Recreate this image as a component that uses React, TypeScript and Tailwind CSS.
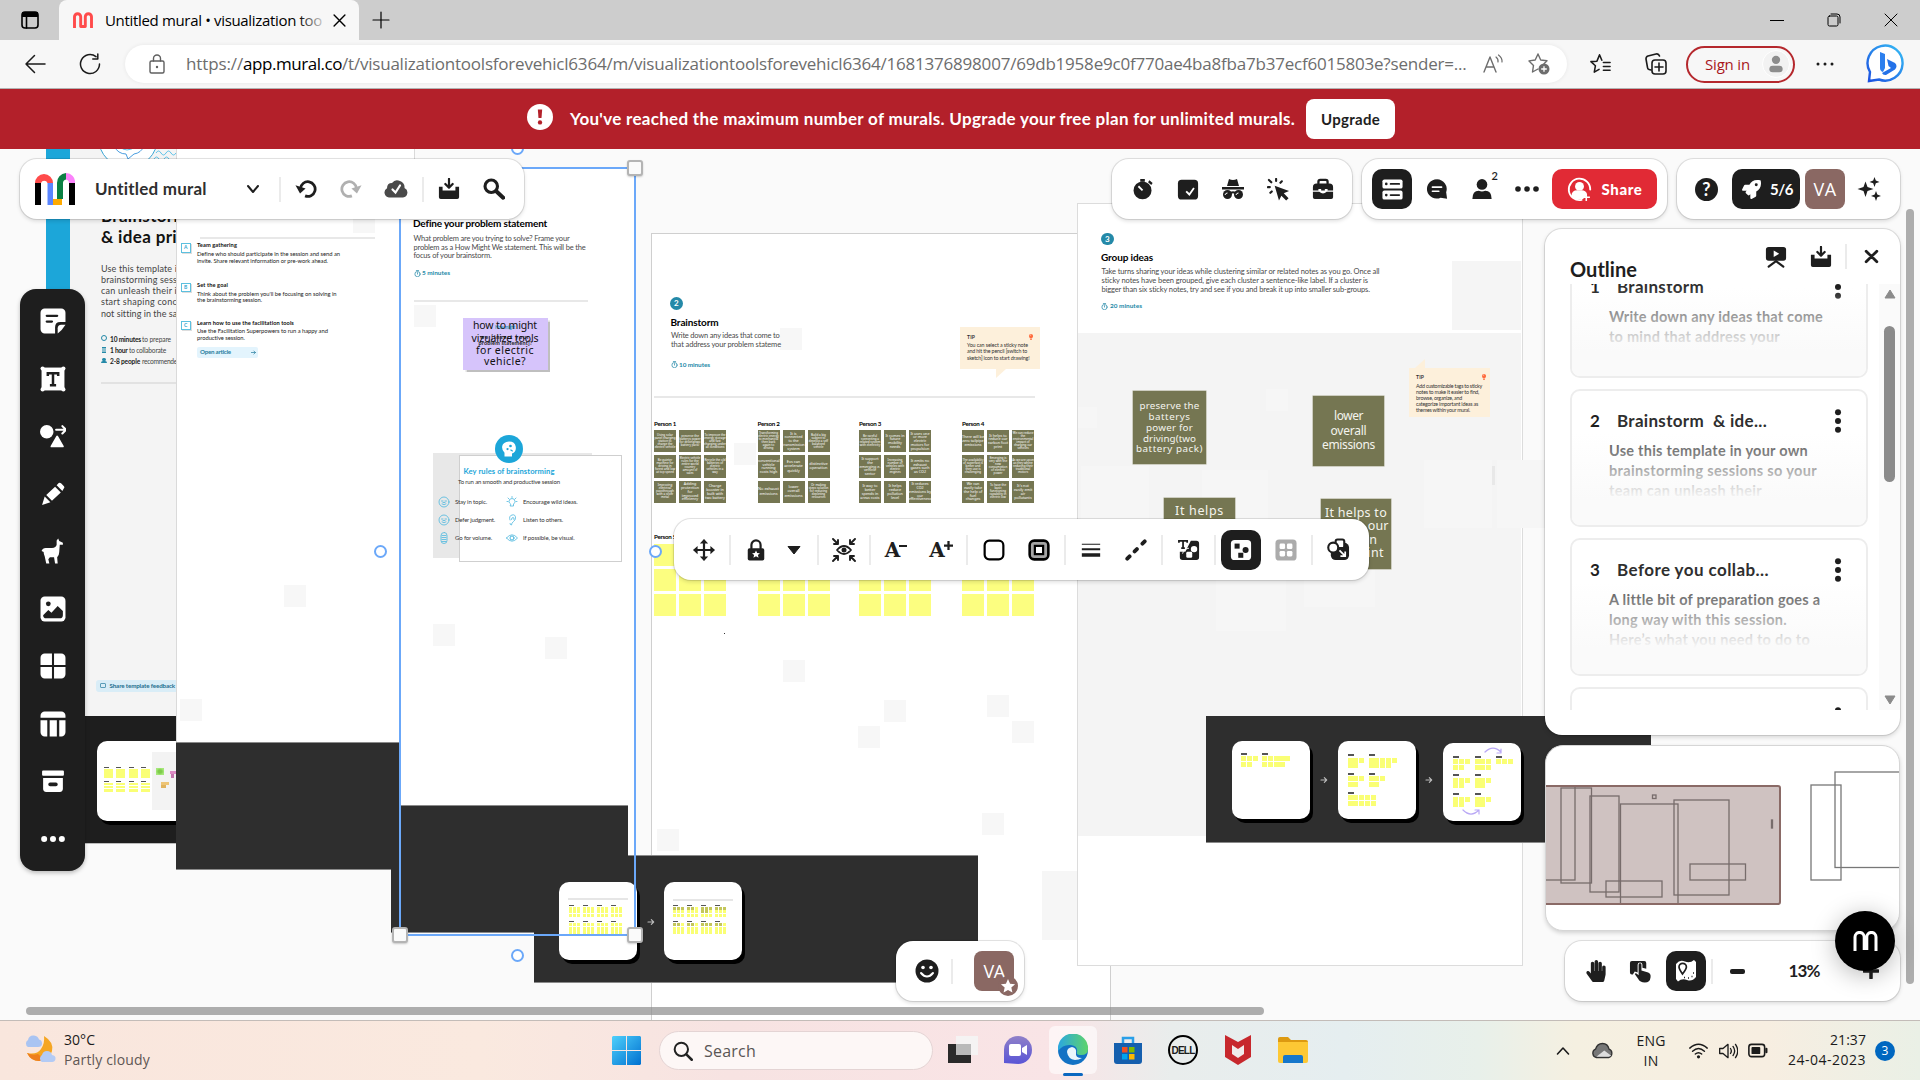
import React, { useLayoutEffect, useRef } from "react";
import { FaRocket, FaHandPaper, FaLightbulb } from "react-icons/fa";

const UI = "font-['Open_Sans','Noto_Sans',sans-serif]";
const HAND = "font-['Noto_Sans',sans-serif]";

/* Text run whose tracking is adjusted to fill a given width. */
function T({ w, className = "", children }: { w: number; className?: string; children: string }) {
  const ref = useRef<HTMLSpanElement>(null);
  useLayoutEffect(() => {
    const el = ref.current!;
    el.style.letterSpacing = "0px";
    const natural = el.getBoundingClientRect().width;
    el.style.letterSpacing = `${(w - natural) / children.length}px`;
  }, [w, children]);
  return (
    <span ref={ref} className={"inline-block w-max whitespace-pre " + className}>
      {children}
    </span>
  );
}

/* Text placed on the canvas; y is its vertical centre. */
function Label({ x, y, w, c = "", children }: { x: number; y: number; w: number; c?: string; children: string }) {
  return (
    <div className={"absolute -translate-y-1/2 leading-none " + c} style={{ left: x, top: y }}>
      <T w={w} className="align-top">{children}</T>
    </div>
  );
}

function Box({ x, y, w, h, c = "", children }: { x: number; y: number; w: number; h: number; c?: string; children?: React.ReactNode }) {
  return (
    <div className={"absolute " + c} style={{ left: x, top: y, width: w, height: h }}>
      {children}
    </div>
  );
}

function Ic({ s = 22, c = "", vb = "0 0 24 24", children }: { s?: number; c?: string; vb?: string; children: React.ReactNode }) {
  return (
    <svg width={s} height={s} viewBox={vb} className={"shrink-0 " + c} fill="currentColor">
      {children}
    </svg>
  );
}

const L = { fill: "none", stroke: "currentColor", strokeLinecap: "round", strokeLinejoin: "round" } as const;

const Slot = ({ children, c = "" }: { children: React.ReactNode; c?: string }) => (
  <div className={"relative flex w-[45px] shrink-0 items-center justify-center " + c}>{children}</div>
);
const Div = ({ c = "mx-[2.75px] h-[30px]" }: { c?: string }) => <div className={"w-[2px] shrink-0 bg-[#ebebeb] " + c} />;
const BAR = "absolute flex items-center rounded-[17px] bg-white shadow-[0_0_0_1px_rgba(0,0,0,0.1),0_2px_4px_rgba(0,0,0,0.14)] text-[#1e1e1e]";

/* ---------- Browser chrome ---------- */
function MuralMark({ c, s = 22 }: { c: string; s?: number }) {
  return (
    <svg width={s} height={s * 0.8} viewBox="0 0 20 16" className={c} {...L} strokeLinecap="butt" strokeWidth="2.900">
      <path d="M1.500 16V4.800a3 3 0 0 1 6.200 0v9.700h4.600V4.800a3 3 0 0 1 6.200 0V16" />
    </svg>
  );
}

function TabStrip() {
  return (
    <div className="flex h-10 items-center bg-[#cdcdcd] text-black">
      <div className="flex w-[59px] justify-center">
        <Ic s={20} vb="0 0 20 20"><rect x="2" y="2" width="16" height="16" rx="3" {...L} strokeWidth="1.6" /><path d="M2 3.500h16v3.500H2zM2 2h16v2H2z" /><path d="M6.500 6v12" {...L} strokeWidth="1.6" /></Ic>
      </div>
      <div className="flex h-10 w-[300px] items-center rounded-t-[8px] bg-[#f7f7f7] pl-[14px]">
        <MuralMark c="text-[#ff4b4b]" s={20} />
        <div className={"relative ml-3 w-[217px] overflow-hidden text-[15px] leading-5 " + UI}>
          <T w={217}>Untitled mural • visualization too</T>
          <div className="absolute inset-y-0 right-0 w-6 bg-gradient-to-r from-transparent to-[#f7f7f7]/80" />
        </div>
        <Ic s={13} c="ml-[11px]" vb="0 0 12 12"><path d="M1 1l10 10M11 1L1 11" {...L} strokeWidth="1.3" /></Ic>
      </div>
      <Ic s={18} c="ml-[13px]" vb="0 0 18 18"><path d="M9 1v16M1 9h16" {...L} strokeWidth="1.2" /></Ic>
      <div className="ml-auto flex items-center gap-[43px] pr-[22px]">
        <div className="h-px w-[14px] bg-black" />
        <Ic s={14} vb="0 0 14 14"><rect x="1" y="3" width="10" height="10" rx="1.500" {...L} /><path d="M4 1h6a3 3 0 0 1 3 3v6" {...L} /></Ic>
        <Ic s={14} vb="0 0 14 14"><path d="M1 1l12 12M13 1L1 13" {...L} /></Ic>
      </div>
    </div>
  );
}

function AddressBar() {
  return (
    <div className={"flex h-[49px] items-center border-b border-[#b3b3b3] bg-[#f7f7f7] text-[17px] text-[#1b1b1b] " + UI}>
      <Ic s={22} c="ml-[24px]" vb="0 0 22 22"><path d="M21 11H2M10.500 2.500L2 11l8.500 8.500" {...L} strokeWidth="1.500" /></Ic>
      <Ic s={22} c="ml-[33px]" vb="0 0 22 22"><path d="M20.500 11A9.500 9.500 0 1 1 17 3.700M18.800 1v5h-5" {...L} strokeWidth="1.500" /></Ic>
      <div className="ml-[24px] flex h-[38px] w-[1442px] items-center rounded-full bg-white text-[#6d6d6d] shadow-[0_0_4px_rgba(0,0,0,0.07)]">
        <Ic s={20} c="ml-[22px] text-[#5f5f5f]" vb="0 0 20 20"><rect x="3" y="7" width="14" height="12" rx="1.500" {...L} strokeWidth="1.400" /><path d="M6.500 7V4.500a3.500 3.500 0 0 1 7 0V7" {...L} strokeWidth="1.400" /><circle cx="10" cy="13" r="1.200" /></Ic>
        <div className="ml-[19px] flex leading-6">
          <T w={57}>https://</T>
          <T w={99} className="text-black">app.mural.co</T>
          <T w={1124.5}>/t/visualizationtoolsforevehicl6364/m/visualizationtoolsforevehicl6364/1681376898007/69db1958e9c0f770ae4ba8fba7b37ecf6015803e?sender=...</T>
        </div>
        <Ic s={22} c="ml-[15px]" vb="0 0 22 22"><path d="M2 19L8 4l6 15M4 14h8" {...L} strokeWidth="1.400" /><path d="M14 4q2.500 2 2 5M16.500 2q4 3 3.500 7" {...L} strokeWidth="1.200" /></Ic>
        <Ic s={24} c="ml-[23px]" vb="0 0 24 24"><path d="M11 2l2.700 6 6.300.7-3 3M11 2L8.200 8 2 8.900l4.500 4.500-1 6.600 5.500-3" {...L} strokeWidth="1.400" /><circle cx="17" cy="17" r="5.500" /><path d="M17 14.200v5.600M14.200 17h5.600" stroke="white" strokeWidth="1.300" /></Ic>
      </div>
      <Ic s={23} c="ml-[22px]"><path d="M11 2L8.300 8.500 2 9l4.700 4.300L5.500 20l5-3M11 2l2.400 5.500M15 10h7M15 14h7M15 18h7" {...L} strokeWidth="1.600" /></Ic>
      <Ic s={24} c="ml-[32px]"><rect x="8" y="8" width="14" height="14" rx="3" {...L} strokeWidth="1.600" /><path d="M15 11v8M11 15h8M7 18l-2-.5a2 2 0 0 1-1.500-2L2 7a3 3 0 0 1 2-3l8-2a3 3 0 0 1 3.500 2" {...L} strokeWidth="1.600" /></Ic>
      <div className="ml-[18px] flex h-[37px] w-[109px] items-center rounded-full border-2 border-[#b5282d] pl-[17px] text-[15px] text-[#a8161c]">
        <T w={45}>Sign in</T>
        <div className="ml-[12px] flex h-[28px] w-[28px] items-center justify-center rounded-full border border-[#fff] bg-[#f2f2f2] text-[#8d8d8d]">
          <Ic s={20}><circle cx="12" cy="7" r="5" /><rect x="4" y="14" width="16" height="8" rx="4" /></Ic>
        </div>
      </div>
      <Ic s={20} c="ml-[20px]" vb="0 0 20 4"><circle cx="3" cy="2" r="1.500" /><circle cx="10" cy="2" r="1.500" /><circle cx="17" cy="2" r="1.500" /></Ic>
      <svg width="40" height="40" viewBox="0 0 40 40" className="ml-[31px]">
        <defs><linearGradient id="bg" x1="0" y1="1" x2="1" y2="0"><stop offset="0" stopColor="#1b4fe0" /><stop offset="1" stopColor="#37bdf5" /></linearGradient></defs>
        <path d="M3 37l1-9A17.500 17.500 0 1 1 13 35.500z" fill="white" stroke="url(#bg)" strokeWidth="2.400" />
        <path d="M14 8l5 2v14l-2 4q-3-1-3-4z" fill="#2c7fee" /><path d="M21 15l8 4q3 3 0 6.500L20 31q-3 .5-4-2l9-5-2.500-2z" fill="#2472e8" />
      </svg>
    </div>
  );
}

/* ---------- Canvas content ---------- */
const stray = [
  [353, 211], [284, 585], [180, 699], [414, 305], [433, 624], [545, 637], [783, 660], [884, 700], [987, 695],
  [1012, 721], [858, 726], [982, 813], [657, 829], [780, 328], [734, 443],
];

const BODY = "text-[#4a4a4a]";
type Row = [number, number, number, string, string];
const P = "text-[7.5px] " + BODY;
const MIN = "text-[6.4px] font-bold text-[#2489a8]";
const RULE = "text-[6px] text-[#333]";
const TIP = "text-[5.3px] text-[#333]";
const H = "text-[10px] font-bold text-black";
const SB = "text-[5.7px] font-bold text-[#111]";
const SP = "text-[5.8px] text-[#222]";

const canvasLabels: Row[] = [
  [413, 223.3, 134, H, "Define your problem statement"],
  [413.5, 238.5, 156, P, "What problem are you trying to solve? Frame your"],
  [413.5, 247.5, 172, P, "problem as a How Might We statement. This will be the"],
  [413.5, 256, 78, P, "focus of your brainstorm."],
  [422, 273, 28, MIN, "5 minutes"],
  [463.5, 472.3, 91, "text-[7.6px] font-bold text-[#1ca6d9]", "Key rules of brainstorming"],
  [458, 482, 102, RULE, "To run an smooth and productive session"],
  [455, 502, 32, RULE, "Stay in topic."],
  [455, 520, 40, RULE, "Defer judgment."],
  [455, 538, 37, RULE, "Go for volume."],
  [523, 502, 54.5, RULE, "Encourage wild ideas."],
  [523, 520, 40, RULE, "Listen to others."],
  [523, 538, 51.5, RULE, "If possible, be visual."],
  [670.5, 321.5, 48, H, "Brainstorm"],
  [671, 336, 108.5, P, "Write down any ideas that come to"],
  [671, 344.7, 110, P, "that address your problem stateme"],
  [679, 364.5, 31, MIN, "10 minutes"],
  [967, 337, 8, "text-[5px] font-bold text-[#333]", "TIP"],
  [967, 346, 61, TIP, "You can select a sticky note"],
  [967, 352, 60, TIP, "and hit the pencil [switch to"],
  [967, 358.5, 62.5, TIP, "sketch] icon to start drawing!"],
];

const labels2: Row[] = [
  [200, 163.5, 82, "text-[11px] font-bold text-black", "Before you collaborate"],
  [197, 245, 40, SB, "Team gathering"],
  [197, 254, 143, SP, "Define who should participate in the session and send an"],
  [197, 261, 131, SP, "invite. Share relevant information or pre-work ahead."],
  [197, 285, 31, SB, "Set the goal"],
  [197, 293.5, 139.5, SP, "Think about the problem you'll be focusing on solving in"],
  [197, 300, 65, SP, "the brainstorming session."],
  [197, 323, 97, SB, "Learn how to use the facilitation tools"],
  [197, 331, 131, SP, "Use the Facilitation Superpowers to run a happy and"],
  [197, 338, 48, SP, "productive session."],
];

const labels5: Row[] = [
  [1101, 257, 52, H, "Group ideas"],
  [1101.5, 271.5, 278, P, "Take turns sharing your ideas while clustering similar or related notes as you go. Once all"],
  [1101.5, 280.5, 266.5, P, "sticky notes have been grouped, give each cluster a sentence-like label. If a cluster is"],
  [1101.5, 289.5, 268.5, P, "bigger than six sticky notes, try and see if you and break it up into smaller sub-groups."],
  [1110, 306, 32, MIN, "20 minutes"],
  [1416, 377, 8, "text-[5px] font-bold text-[#333]", "TIP"],
  [1416, 387, 66, TIP, "Add customizable tags to sticky"],
  [1416, 393, 63, TIP, "notes to make it easier to find,"],
  [1416, 399, 46, TIP, "browse, organize, and"],
  [1416, 404.5, 62, TIP, "categorize important ideas as"],
  [1416, 410.5, 54, TIP, "themes within your mural."],
];

function Labels({ data }: { data: Row[] }) {
  return <>{data.map(([x, y, w, c, t], i) => <Label key={i} x={x} y={y} w={w} c={c}>{t}</Label>)}</>;
}

function Watch({ x, y }: { x: number; y: number }) {
  return (
    <Box x={x - 3.5} y={y - 3.5} w={7} h={7} c="text-[#2489a8]">
      <Ic s={7} c="block"><circle cx="12" cy="14" r="9" {...L} strokeWidth="2.500" /><path d="M12 14V9M8 1.500h8" {...L} strokeWidth="2.500" /></Ic>
    </Box>
  );
}

const notes: string[][] = [
  ["Using solar panel charging station to charge the electric vehicle", "preserve the batterys power for driving(two battery pack)", "To improve the energy storage and fast charging under all conditions", "Be quieter machine for driving in forest and low at top speed", "Electric vehicle rules for the entire world country amount of sales", "Recycle the old batteries of electric vehicles in a way", "Improving electrical passthrough with a silver metal", "Adding protection for improved efficiency", "Charge booster in built with two battery"],
  ["Transforming electric energy to mechanical then back again to driving", "It is connected to the transmission system", "Build a big subject to develop a self balanced vehicle", "conventional vehicle running costs high", "Evs can accelerate quickly", "distinctive operation", "No exhaust emissions", "lower overall emissions", "Or making steps solution for reducing depleting resources"],
  ["Be careful connecting a related system with electricity", "It comes in future mobility needs", "It uses one or more electric motors for propulsion", "It support the emerging e-vehicle sector", "Increasing number of vehicles with electric engines", "It emits no exhaust gases such as CO2", "It way to better spends in areas costs", "It helps reduce pollution level", "It reduces CO2 emissions by our effectiveness"],
  ["There will be zero tailpipe emissions", "It helps to reduce our carbon foot print", "We can reduce the environmental impact of charging our vehicles", "The availability of superfast is better and then use is challenging", "Emerging is very with the new consumption of electric power", "As we are upon as they where reducing their traditional motors", "We can easily take the help of fuel changes", "To have the basic functioning capability in electric low", "It's not easily emit air pollutants"],
];
const noteSize = ["text-[3px] leading-[3px]", "text-[3.7px] leading-[3.8px]", "text-[3.9px] leading-[4.6px]"];

function Person({ x, n }: { x: number; n: number }) {
  return (
    <>
      <Label x={x} y={423.5} w={22} c="text-[6.2px] font-bold text-black">{`Person ${n}`}</Label>
      <div className="absolute grid grid-cols-[repeat(3,22px)] gap-[3px]" style={{ left: x, top: 430 }}>
        {notes[n - 1].map((t, i) => (
          <div key={i} className={"flex h-[22.3px] items-center justify-center overflow-hidden bg-[#757652] text-center text-white " + HAND + " " + noteSize[t.length > 50 ? 0 : t.length > 28 ? 1 : 2]}>{t}</div>
        ))}
      </div>
      <Label x={x} y={537} w={22} c="text-[6.2px] font-bold text-black">{`Person ${n + 4}`}</Label>
      <div className="absolute grid grid-cols-[repeat(3,22px)] gap-[3px]" style={{ left: x, top: 544 }}>
        {Array.from({ length: 9 }, (_, i) => <div key={i} className="h-[22px] bg-[#fcfe80]" />)}
      </div>
    </>
  );
}

/* Tiny cluster of yellow notes, `rows` lists the note count of each line. */
function Cluster({ x, y, rows }: { x: number; y: number; rows: number[] }) {
  return (
    <div className="absolute flex flex-col gap-[0.6px]" style={{ left: x, top: y }}>
      <div className="mb-px h-[2px] w-[6px] bg-[#555]" />
      {rows.map((n, r) => (
        <div key={r} className="flex gap-[0.6px]">
          {Array.from({ length: n }, (_, i) => <div key={i} className="h-[5px] w-[5.2px] bg-[#faff75]" />)}
        </div>
      ))}
    </div>
  );
}

function MiniGrid({ x, y, dark = 0, small = false }: { x: number; y: number; dark?: number; small?: boolean }) {
  return (
    <div className="absolute" style={{ left: x, top: y }}>
      <div className="mb-px h-px w-[5px] bg-[#555]" />
      <div className={"grid gap-[0.4px] " + (small ? "grid-cols-[repeat(3,2.8px)]" : "grid-cols-[repeat(3,3.4px)]")}>
        {Array.from({ length: 9 }, (_, i) => <div key={i} className={(small ? "h-[2.8px] " : "h-[3.3px] ") + (i < dark ? "bg-[#c3c65a]" : "bg-[#faff75]")} />)}
      </div>
    </div>
  );
}

const CARD = "rounded-[10px] bg-white shadow-[3px_4px_0_#000]";
const DARK = "bg-[#2e2e2e] border-b border-[#8a8a8a]";

function Arrow({ x, y, c = "text-[#bbb]" }: { x: number; y: number; c?: string }) {
  return <Box x={x - 4} y={y - 4} w={8} h={8} c={c}><Ic s={8} c="block"><path d="M3 12h17M13 5l7 7-7 7" {...L} strokeWidth="3.500" /></Ic></Box>;
}

function BoardIntro() {
  return (
    <Box x={0} y={149} w={177} h={700} c="overflow-hidden">
      <Box x={0} y={-149} w={400} h={1020}>
        <Box x={46} y={140} w={24} h={200} c="bg-[#1ca6d9]" />
        <Box x={70} y={140} w={107} h={576} c="bg-[#f4f4f4]" />
        <Box x={98} y={108} w={60} h={60} c="rounded-full border-[1.5px] border-[#3aa6d5] bg-white" />
        <Box x={112} y={136} w={66} h={24} c="text-[#4a9ee0]">
          <svg width="66" height="24" fill="none" stroke="currentColor" strokeWidth="1"><path d="M2 10q4 8 12 8l2 5 6-5q7-1 10-8" /><path d="M7 10q4 4 8 4t10-4M44 17q2.500-4 5 0t5 0 5 0 5 0M42 23q2.500-4 5 0t5 0 5 0 5 0" stroke="#5cc2e8" /></svg>
        </Box>
        <Label x={101} y={215} w={87} c="text-[17px] font-bold text-[#111]">Brainstorm</Label>
        <Label x={101} y={236} w={76} c="text-[17px] font-bold text-[#111]">{"& idea pri"}</Label>
        <Label x={101} y={267.5} w={76} c="text-[9px] text-[#444]">Use this template i</Label>
        <Label x={101} y={278.5} w={76} c="text-[9px] text-[#444]">brainstorming sess</Label>
        <Label x={101} y={290} w={76} c="text-[9px] text-[#444]">can unleash their i</Label>
        <Label x={101} y={301} w={76} c="text-[9px] text-[#444]">start shaping conc</Label>
        <Label x={101} y={312.5} w={76} c="text-[9px] text-[#444]">not sitting in the sa</Label>
        <Box x={101} y={335} w={6} h={6} c="rounded-full border border-[#2489a8]" />
        <Box x={102} y={347} w={4} h={6} c="border-y border-[#2489a8] bg-[#2489a8]/50" />
        <Box x={102} y={358} w={4} h={3} c="rounded-full bg-[#2489a8]" />
        <Box x={101} y={361} w={6} h={2} c="rounded-t-full bg-[#2489a8]" />
        <Label x={110} y={338.5} w={31} c="text-[6.6px] font-bold text-[#222]">10 minutes</Label>
        <Label x={142} y={338.5} w={29} c="text-[6.6px] text-[#444]">to prepare</Label>
        <Label x={110} y={350} w={17.5} c="text-[6.6px] font-bold text-[#222]">1 hour</Label>
        <Label x={129} y={350} w={37} c="text-[6.6px] text-[#444]">to collaborate</Label>
        <Label x={110} y={361} w={30} c="text-[6.6px] font-bold text-[#222]">2-8 people</Label>
        <Label x={142} y={361} w={35} c="text-[6.6px] text-[#444]">recommende</Label>
        <Box x={101} y={382} w={76} h={2} c="bg-[#e2e2e2]" />
        <Box x={96} y={680} w={90} h={12} c="rounded-[3px] bg-[#d9edf7]" />
        <Box x={100} y={683} w={6} h={5} c="rounded-[1px] border border-[#5b9db8]" />
        <Label x={109.5} y={686} w={65.5} c="text-[6.2px] font-bold text-[#1f6f8f]">Share template feedback</Label>
        <Box x={70} y={716} w={107} h={128} c="border-b border-[#bbb] bg-[#1e1e1e]" />
        <Box x={97} y={741} w={120} h={80} c={CARD} />
        <Box x={152} y={752} w={30} h={58} c="bg-[#f3f3f3]" />
        {[104, 116, 129, 141].map((x) => [767, 780.5].map((y) => <MiniGrid key={x + "-" + y} x={x} y={y} small />))}
        <Box x={156} y={768} w={8} h={7} c="bg-[radial-gradient(#7ecb4a_30%,#a6e87a_70%)]" />
        <Box x={170} y={771} w={7} h={3} c="bg-[#dc8cc4]" />
        <Box x={171} y={774} w={3} h={4} c="bg-[#c477ae]" />
        <Box x={161} y={782} w={8} h={3} c="bg-[#edc476]" />
        <Box x={161} y={785} w={5} h={3} c="bg-[#e0b35e]" />
      </Box>
    </Box>
  );
}

function RuleIcon({ x, y, k }: { x: number; y: number; k: number }) {
  return (
    <Box x={x - 6} y={y - 6} w={12} h={12} c="text-[#4db8de]">
      <Ic s={12} c="block">
        {k === 0 && <><circle cx="12" cy="12" r="10" {...L} strokeWidth="1.600" /><path d="M7 10h3M14 10h3M8 16q4 3 8 0M10 13h4" {...L} strokeWidth="1.600" /></>}
        {k === 1 && <path d="M9 16q-3-2-3-5a6 6 0 0 1 12 0q0 3-3 5v4H9zM12 1v2M2 11h2M20 11h2M4 4l2 2M20 4l-2 2" {...L} strokeWidth="1.600" />}
        {k === 2 && <path d="M8 12q-3-8 4-10t7 6q0 4-4 7t-4 7q-3 0-3-3M11 11q0-4 3-4t2 4" {...L} strokeWidth="1.600" />}
        {k === 3 && <><rect x="6" y="1" width="12" height="22" rx="6" {...L} strokeWidth="1.600" /><path d="M8 7h8M8 11h8M8 15h8M8 19h8" {...L} strokeWidth="1.600" /></>}
        {k === 4 && <><path d="M1 12q11-13 22 0-11 13-22 0z" {...L} strokeWidth="1.600" /><circle cx="12" cy="12" r="4" {...L} strokeWidth="2" /></>}
      </Ic>
    </Box>
  );
}

function Bulb({ x, y }: { x: number; y: number }) {
  return <Box x={x - 3} y={y - 3} w={6} h={6} c="text-[#ff6b3d]"><FaLightbulb size={6} className="block" /></Box>;
}

function Sticky({ x, y, w, h, c, lines }: { x: number; y: number; w: number; h: number; c: string; lines: [string, number, number][] }) {
  return (
    <Box x={x} y={y} w={w} h={h} c="bg-[#757652] shadow-[0_0_0_0.5px_#a5a68c]">
      {lines.map(([t, cy, tw]) => <Label key={t} x={w / 2 - tw / 2} y={cy - y} w={tw} c={"text-[#f4f4ee] " + HAND + " " + c}>{t}</Label>)}
    </Box>
  );
}

function Boards() {
  return (
    <>
      <BoardIntro />
      {/* Before you collaborate */}
      <Box x={176} y={100} w={239} h={642} c="border-x border-[#dadada] bg-white" />
      <Box x={176} y={742} w={260} h={128} c={DARK + " border-t"} />
      <Labels data={labels2} />
      <Box x={200} y={236.5} w={175} h={2} c="bg-[#e8e8e8]" />
      {["A", "B", "C"].map((t, i) => (
        <Box key={t} x={181} y={[243, 282.5, 320.5][i]} w={9.5} h={9.5} c="flex items-center justify-center border border-[#5cc0df] bg-white text-[5px] font-bold leading-none text-[#2fa6cf] shadow-[1px_1px_0_#ddd]">{t}</Box>
      ))}
      <Box x={197} y={347} w={61} h={11} c="rounded-[2px] bg-[#e3f4fd]" />
      <Label x={200} y={352} w={31} c="text-[6.2px] font-bold text-[#2a7fa0]">Open article</Label>
      <Box x={250.5} y={349.5} w={5} h={5} c="text-[#2a7fa0]"><Ic s={5} c="block"><path d="M2 12h19M14 5l7 7-7 7" {...L} strokeWidth="3.500" /></Ic></Box>

      {/* Brainstorm */}
      <Box x={651} y={233} w={460} h={820} c="border border-[#cfcfcf] bg-white" />
      {/* Define your problem statement */}
      <Box x={391} y={805} w={237} h={128} c={DARK} />
      <Box x={401} y={168} w={233} h={637} c="bg-white" />
      <Box x={401} y={805} w={227} h={1} c="bg-[#8a8a8a]" />
      <Box x={628} y={805} w={6} h={51} c="bg-white" />
      {/* Group ideas */}
      <Box x={1077} y={203} w={446} h={763} c="border border-[#dcdcdc] bg-white" />
      <Box x={1078} y={333} w={443} h={503} c="bg-[#f4f4f4]" />
      <Box x={1452} y={261} w={69} h={69} c="bg-[#f5f5f5]" />
      {[[1078, 407, 19, 21], [1266, 389, 22, 22], [1081, 466, 68, 68], [1202, 470, 66, 68], [1424, 460, 68, 68], [1497, 460, 50, 68], [1216, 580, 70, 51], [1304, 570, 71, 37], [1042, 871, 35, 69]].map(([x, y, w, h], i) => (
        <Box key={i} x={x} y={y} w={w} h={h} c="bg-[#f6f6f6]" />
      ))}
      <Box x={1492} y={466} w={3} h={19} c="bg-[#e8e8e8]" />
      <Box x={534} y={856} w={444} h={127} c={DARK} />
      <Box x={628} y={855} w={350} h={1} c="bg-[#8a8a8a]" />
      {stray.map(([x, y]) => <Box key={x + "-" + y} x={x} y={y} w={22} h={22} c="bg-[#f7f7f7]" />)}

      {/* Problem statement details */}
      <Box x={413.5} y={300} w={174.5} h={2} c="bg-[#e8e8e8]" />
      <Watch x={417} y={273} />
      <Box x={463} y={317.5} w={84.5} h={52} c="bg-[#d6c4fb] shadow-[1.5px_1.5px_1px_rgba(0,0,0,0.25)]" />
      <Label x={495} y={327} w={20} c="text-[4.6px] font-bold text-[#2f9cc4]">How might</Label>
      <Label x={480} y={338} w={50} c="text-[5.5px] font-bold text-[#222]">we [insert your</Label>
      <Label x={478.5} y={343.5} w={54} c="text-[5.5px] font-bold text-[#222]">problem statement]?</Label>
      {([["how to might", 325, 64], ["vizualize tools", 337.5, 67], ["for electric", 349.5, 58], ["vehicle?", 361, 42]] as [string, number, number][]).map(([t, y, w]) => (
        <Label key={t} x={505 - w / 2} y={y} w={w} c={"text-[10.5px] text-[#111] " + HAND}>{t}</Label>
      ))}
      <Box x={433} y={453} w={159} h={105} c="bg-[#e8e8e8]" />
      <Box x={459} y={455} w={163} h={107} c="border border-[#cfcfcf] bg-[linear-gradient(to_right,#fff,#fff)]" />
      <Box x={495} y={435} w={28} h={28} c="flex items-center justify-center rounded-full bg-[#1ca6d9] text-white">
        <Ic s={18}><path d="M6 22v-5q-4-4-3-9t9-6q8 0 9 7t-5 9v4z" /><circle cx="14" cy="8" r="1.800" fill="#1ca6d9" /><circle cx="10" cy="12" r="1.500" fill="#1ca6d9" /><path d="M14 13l3 2" stroke="#1ca6d9" strokeWidth="1.500" /></Ic>
      </Box>
      {[[444, 502, 0], [444, 520, 0], [444, 538, 3], [512, 502, 1], [512, 520, 2], [512, 538, 4]].map(([x, y, k]) => <RuleIcon key={x + "-" + y} x={x} y={y} k={k} />)}

      {/* Brainstorm details */}
      <Box x={670} y={297} w={12.5} h={12.5} c="flex items-center justify-center rounded-full bg-[#2489a8] text-[8px] font-bold leading-none text-white">2</Box>
      <Watch x={674.5} y={364.5} />
      <Box x={654} y={396} w={381} h={2} c="bg-[#e8e8e8]" />
      <Box x={960} y={327} w={80} h={42} c="bg-[#fdf0db]" />
      <Box x={996} y={369} w={10} h={9} c="bg-[#fdf0db] [clip-path:polygon(0_0,100%_0,0_100%)]" />
      <Bulb x={1031} y={337} />
      <Labels data={canvasLabels} />
      {[654, 757.5, 859, 962].map((x, i) => <Person key={x} x={x} n={i + 1} />)}
      <Box x={724} y={633} w={1} h={1} c="bg-[#333]" />

      {/* Group ideas details */}
      <Box x={1101} y={232.5} w={12.5} h={12.5} c="flex items-center justify-center rounded-full bg-[#2489a8] text-[8px] font-bold leading-none text-white">3</Box>
      <Watch x={1104.5} y={306.5} />
      <Box x={1409} y={368} w={81} h={49} c="bg-[#fdf0db]" />
      <Box x={1415} y={359} w={10} h={9} c="bg-[#fdf0db] [clip-path:polygon(100%_0,100%_100%,0_100%)]" />
      <Bulb x={1483.5} y={377} />
      <Labels data={labels5} />
      <Sticky x={1133} y={391} w={73} h={73} c="text-[9.8px]" lines={[["preserve the", 405.5, 60], ["batterys", 416.5, 42], ["power for", 427.5, 47], ["driving(two", 438.5, 53], ["battery pack)", 449, 67]]} />
      <Sticky x={1313} y={395.5} w={71} h={70} c="text-[12px]" lines={[["lower", 416, 29], ["overall", 430.5, 36], ["emissions", 445, 53]]} />
      <Sticky x={1164} y={498} w={71} h={71} c="text-[12.5px]" lines={[["It helps", 511, 49]]} />
      <Sticky x={1321} y={498.5} w={70} h={70} c="text-[12.5px]" lines={[["It helps to", 513, 62], ["reduce our", 526, 65], ["carbon", 540, 42], ["footprint", 553, 56]]} />

      {/* Instruction strips */}
      <Box x={559} y={882} w={78} h={78} c={CARD} />
      <Box x={664} y={882} w={78} h={78} c={CARD} />
      <Box x={568} y={898} w={60} h={2} c="bg-[#e6e6e6]" />
      <Box x={673} y={899} w={60} h={2} c="bg-[#e6e6e6]" />
      {[0, 14, 28, 42].map((d, i) => (
        <React.Fragment key={d}>
          <MiniGrid x={569 + d} y={904.5} /><MiniGrid x={569 + d} y={921} />
          <MiniGrid x={673 + d} y={904.5} dark={[3, 2, 5, 3][i]} /><MiniGrid x={673 + d} y={921} dark={[2, 2, 3, 2][i]} />
        </React.Fragment>
      ))}
      <Arrow x={650.5} y={921.5} />
      <Box x={1206} y={716} w={445} h={127} c={DARK} />
      <Box x={1232} y={741} w={78} h={78} c={CARD} />
      <Box x={1337.5} y={741} w={78} h={78} c={CARD} />
      <Box x={1443} y={742.5} w={78} h={78} c={CARD} />
      <Arrow x={1323.5} y={780} />
      <Arrow x={1429} y={780} />
      {[[1241, 752.5, 3, 2], [1262, 752.5, 5, 4], [1347.5, 754, 3, 2], [1368.5, 754, 5, 4], [1347.5, 772.5, 3, 2], [1368.5, 772.5, 3, 2], [1347.5, 791.5, 5, 5], [1453, 755.5, 3, 2], [1474.5, 755.5, 3, 3], [1453, 774, 3, 2], [1474.5, 774, 3, 2], [1453, 793, 3, 2], [1474.5, 793, 3, 2], [1496, 755.5, 3, 0]].map(([x, y, a, b], i) => <Cluster key={i} x={x} y={y} rows={b ? [a, b] : [a]} />)}
      <Box x={1462} y={746} w={44} h={72} c="text-[#b9a8f5]">
        <svg width="44" height="72" {...L} strokeWidth="1.200"><path d="M23 6q8-8 16 0M39 3v4h-4M1 64q8 8 16 0M13 64h4v4" /></svg>
      </Box>
    </>
  );
}

function Selection() {
  const dot = "rounded-full border-2 border-[#6ba8f9] bg-white";
  const sq = "rounded-[3px] border-2 border-[#b4b4b4] bg-[#fafafa] shadow-[0_1px_2px_rgba(0,0,0,0.2)]";
  return (
    <>
      <Box x={399} y={167} w={237} h={769} c="border-2 border-[#6ba8f9]" />
      {[[517, 148], [380, 551], [655, 551], [517, 954.5]].map(([x, y]) => <Box key={x + "-" + y} x={x - 6} y={y - 6} w={13} h={13} c={dot} />)}
      {[[635, 168], [400, 935], [635, 935]].map(([x, y]) => <Box key={x + "-" + y} x={x - 8} y={y - 8} w={16} h={16} c={sq} />)}
    </>
  );
}

/* ---------- Toolbars ---------- */
const Download = () => <Ic><path d="M1 9.500h4v4h14v-4h4V21a2 2 0 0 1-2 2H3a2 2 0 0 1-2-2z" /><path d="M12 1v9M8 6.500l4 4 4-4" {...L} strokeWidth="2.400" /></Ic>;

function TitleBar() {
  return (
    <div className={BAR + " left-[20px] top-[159px] h-[60px] w-[504px] pl-[15px]"}>
      <svg width="40" height="32" viewBox="0 0 40 32" className="shrink-0">
        <path d="M0 10h6v22H0zM34 10h6v22h-6z" fill="#000" />
        <path d="M0 10a9 9 0 0 1 18 0h-5.500a3.500 3.500 0 0 0-6.500 0z" fill="#ff4b4b" />
        <path d="M12.500 10H18v22h-5.500z" fill="#5b86ff" />
        <path d="M22 26V10a9.500 9.500 0 0 1 9-10v6.500q-3 .5-3 3.500v16z" fill="#0b8043" />
        <path d="M31 0a9 9 0 0 1 9 10h-6q0-3-3-3.500z" fill="#fb83fb" />
        <path d="M18 26h9v6h-9z" fill="#ffaa00" />
      </svg>
      <T w={112} className="ml-[20px] text-[17px] font-bold text-[#2f2f2f]">Untitled mural</T>
      <Ic s={14} c="ml-[39px]" vb="0 0 14 14"><path d="M2 4l5 6 5-6" {...L} strokeWidth="2" /></Ic>
      <Div c="ml-[19px] mr-[3px] h-[25px]" />
      <Slot><Ic><path d="M5 11.500A8 8 0 1 1 10 19.500" {...L} strokeLinecap="butt" strokeWidth="3" transform="translate(1 0)" /><path d="M0.500 8l11 3.500-6 5.500z" /></Ic></Slot>
      <Slot c="text-[#b0b0b0]"><Ic><path d="M18 11.500A8 8 0 1 0 13 19.500" {...L} strokeLinecap="butt" strokeWidth="3" /><path d="M23.500 8l-11 3.500 6 5.500z" /></Ic></Slot>
      <Slot c="text-[#4a4a4a]"><Ic s={24}><path d="M5 20.500a5 5 0 0 1-2-9.300Q3 6 8 6q3-4 8-2t4.500 7A5 5 0 0 1 19 20.500z" /><path d="M8.500 12.500l3 3 4.500-7" stroke="white" fill="none" strokeWidth="2.200" strokeLinecap="round" /></Ic></Slot>
      <Div c="mx-[3px] h-[25px]" />
      <Slot><Download /></Slot>
      <Slot><Ic><circle cx="9" cy="9" r="6.800" {...L} strokeWidth="3.400" /><path d="M14.500 14.500L22 21.500" {...L} strokeWidth="4.400" /></Ic></Slot>
    </div>
  );
}

function TopBars() {
  return (
    <>
      <div className={BAR + " left-[1112px] top-[159px] h-[60px] w-[240px] pl-[8.5px]"}>
        <Slot><Ic><circle cx="11.500" cy="13.500" r="9.800" /><path d="M9 1h5v3H9zM19 2.500l3.500 3-1.500 2-3.500-3z" /><path d="M11.500 13.500L7 9" stroke="white" strokeWidth="2" /></Ic></Slot>
        <Slot><Ic><rect x="1" y="2" width="22" height="21.500" rx="4" /><path d="M10 14.500l3.500 3.500 5-7" stroke="white" fill="none" strokeWidth="2" /></Ic></Slot>
        <Slot><Ic s={24}><path d="M6 9l2-7q4 2 8 0l2 7zM1 10h22v2.500H1z" /><circle cx="6.500" cy="17.500" r="4.500" /><circle cx="17.500" cy="17.500" r="4.500" /><path d="M10 16q2-1.500 4 0" {...L} strokeWidth="2" /><path d="M4 18q.5-2 2.500-2M15 18q.5-2 2.500-2" stroke="white" fill="none" /></Ic></Slot>
        <Slot><Ic s={23}><path d="M8 8l15 5.500-5.500 2.500 5 5-2.500 2.500-5-5-2.500 5z" /><path d="M4.500 4.500L2 2M9.500 3V1M3 9.500H1M5 14l-1.500 1.500M14 5l1.500-1.500" {...L} strokeWidth="2.200" /></Ic></Slot>
        <Slot><Ic><path d="M1 10q0-4 4-4h14q4 0 4 4v3.500h-6V12h-3v1.500h-4V12H7v1.500H1zM1 15h7q4 4 8 0h7v6a2 2 0 0 1-2 2H3a2 2 0 0 1-2-2z" /><path d="M7 6V4q0-2 2-2h6q2 0 2 2v2" {...L} strokeWidth="2.500" /></Ic></Slot>
      </div>
      <div className={BAR + " left-[1362px] top-[159px] h-[60px] w-[305px] pl-[7.5px]"}>
        <Slot>
          <div className="flex h-10 w-10 items-center justify-center rounded-[10px] bg-[#1e1e1e] text-white">
            <Ic s={23}><rect x="1.500" y="1.500" width="21" height="9.500" rx="2" /><rect x="1.500" y="13" width="21" height="9.500" rx="2" /><path d="M10 6.200h9M10 17.800h9" stroke="#1e1e1e" strokeWidth="1.800" strokeLinecap="round" /><circle cx="5.500" cy="6.200" r="1.400" fill="#1e1e1e" /><circle cx="5.500" cy="17.800" r="1.400" fill="#1e1e1e" /></Ic>
          </div>
        </Slot>
        <Slot><Ic><path d="M12 1.500a10.500 10.500 0 0 1 10 14l1 7-7-1A10.500 10.500 0 1 1 12 1.500z" /><path d="M7 10h10M7 14.500h7" stroke="white" strokeWidth="1.800" strokeLinecap="round" /></Ic></Slot>
        <Slot><Ic><circle cx="12" cy="7" r="5.800" /><path d="M1.500 23q0-9 7-9 3.500 1.500 7 0 7 0 7 9z" /></Ic><span className="absolute left-[32px] -top-[8px] text-[11px] font-semibold leading-none">2</span></Slot>
        <Slot><Ic s={24}><circle cx="3" cy="12" r="2.800" /><circle cx="12" cy="12" r="2.800" /><circle cx="21" cy="12" r="2.800" /></Ic></Slot>
        <div className="ml-[2px] flex h-10 w-[105px] items-center rounded-[10px] bg-[#e12a35] pl-[15px] text-white">
          <Ic s={25}><path d="M14 22A10.300 10.300 0 1 1 22.300 12" {...L} strokeWidth="1.800" /><circle cx="12" cy="9" r="4.300" /><path d="M5 18.500q0-5 5-5 2 1 4 0 3.500 0 4.500 3l-3.500 4q-5 1.500-10-2zM18.500 16v7M15 19.500h7" stroke="currentColor" strokeWidth="1.500" /></Ic>
          <T w={41} className="ml-[10px] text-[15px] font-black">Share</T>
        </div>
      </div>
      <div className={BAR + " left-[1677px] top-[159px] h-[60px] w-[223px] pl-[7px]"}>
        <Slot><div className="flex h-[23px] w-[23px] items-center justify-center rounded-full bg-[#1e1e1e] text-[18px] font-bold leading-none text-white">?</div></Slot>
        <div className="ml-[3px] flex h-10 w-[68px] items-center rounded-[10px] bg-[#1e1e1e] pl-[10px] text-white">
          <FaRocket size={19} /><T w={23} className="ml-[9px] text-[15px] font-bold">5/6</T>
        </div>
        <div className={"ml-[5px] flex h-10 w-10 items-center justify-center rounded-[8px] bg-[#8a6863] text-[18px] text-white " + UI}><T w={23}>VA</T></div>
        <Slot c="ml-[1px]"><Ic s={24}><path d="M8.500 4.500l2 5.500 6 2-6 2-2 6-2-6-6-2 6-2zM17.500 0l1.300 3.600L22.500 5l-3.700 1.300L17.500 10l-1.300-3.700L12.500 5l3.700-1.400zM19 14l1.300 3.600L24 19l-3.700 1.300L19 24l-1.300-3.700L14 19l3.700-1.400z" /></Ic></Slot>
      </div>
    </>
  );
}

function SideTools() {
  const D = "#1e1e1e";
  const icons = [
    <><path d="M4 0h16a4 4 0 0 1 4 4v9h-5q-5 0-5 5v6H4a4 4 0 0 1-4-4V4a4 4 0 0 1 4-4z" /><path d="M16.500 24v-5q0-3.500 3.500-3.500h4q-3 5-7.500 8.500z" /><path d="M6 7h10M6 12.500h5" stroke={D} strokeWidth="2.200" strokeLinecap="round" /></>,
    <><rect x="1" y="1" width="22" height="22" /><circle cx="2" cy="2" r="2" /><circle cx="22" cy="2" r="2" /><circle cx="2" cy="22" r="2" /><circle cx="22" cy="22" r="2" /><path d="M7 9V6.500h10V9M12 6v12M9 18h6" stroke={D} strokeWidth="2.400" fill="none" /></>,
    <><circle cx="6" cy="8" r="6.500" /><path d="M15 6h9M21 2.500L24.500 6 21 9.500" {...L} strokeWidth="2" /><path d="M16 12.500L21.500 22h-11z" stroke="currentColor" strokeWidth="1.800" strokeLinejoin="round" /></>,
    <><path d="M1.500 22.500l2.500-8 5.500 5.500zM5.500 13l8.500-8 5.500 5.500-8.500 8zM15.500 3.500l2-2q1-1 2.500.5l2.500 2.500q1 1 0 2L21 9z" /></>,
    <path d="M15.500 2l1.500-2 1 2.500 3.500 1.500v2h-3l-.5 7q0 3-2 5l.5 6h-2.500l-1-6H9l-1.500 2 1 4H5.500L4 17q-1-2-1-4l-2-1q1-3 4-3h6q4 0 4.500-3z" />,
    <><rect width="24" height="24" rx="4" /><circle cx="7.500" cy="7" r="2.300" fill={D} /><path d="M2.500 18l5-5 3 2.500 6-6.500 5 5v4q0 3-3 3h-13q-3 0-3-3z" fill={D} /></>,
    <><path d="M4 0h7v11H0V4a4 4 0 0 1 4-4zM13 0h7a4 4 0 0 1 4 4v7H13zM0 13h11v11H4a4 4 0 0 1-4-4zM13 13h11v7a4 4 0 0 1-4 4h-7z" /></>,
    <><path d="M4 0h16a4 4 0 0 1 4 4v2H0V4a4 4 0 0 1 4-4zM0 8.500h6.500V24H4a4 4 0 0 1-4-4zM8.800 8.500h6.900V24H8.800zM18 8.500h6V20a4 4 0 0 1-4 4h-2z" /></>,
    <><rect x="1.500" y="2" width="21" height="5" rx="1" /><path d="M2.500 9h19v10.500q0 3-3 3h-13q-3 0-3-3z" /><rect x="7.500" y="13.500" width="9" height="3.500" rx="1.700" fill={D} /></>,
    <><circle cx="3.500" cy="12" r="2.900" /><circle cx="12" cy="12" r="2.900" /><circle cx="20.500" cy="12" r="2.900" /></>,
  ];
  return (
    <div className="absolute left-[20px] top-[289px] flex h-[582px] w-[65px] flex-col items-center rounded-[16px] bg-[#1e1e1e] pt-[3.5px] text-white shadow-[0_2px_4px_rgba(0,0,0,0.25)]">
      {icons.map((n, i) => <div key={i} className="flex h-[57.5px] items-center"><Ic s={26} vb="-0.500 -0.500 25 25">{n}</Ic></div>)}
    </div>
  );
}

function ShapeBar() {
  const W = "white";
  return (
    <div className={BAR + " left-[674px] top-[519px] h-[61px] w-[695px] pl-[7px]"}>
      <Slot><Ic><path d="M12 2v20M2 12h20" {...L} strokeWidth="2.400" /><path d="M12 0l4.500 5h-9zM12 24l4.500-5h-9zM0 12l5-4.500v9zM24 12l-5-4.500v9z" /></Ic></Slot>
      <Div />
      <Slot><Ic><rect x="3" y="10" width="18" height="13.500" rx="2" /><path d="M7 10V6.500a5 5 0 0 1 10 0V10" {...L} strokeWidth="2.400" /><path d="M12 12.500l1.300 2.700 3 .3-2.200 2 .7 3-2.800-1.600-2.800 1.600.7-3-2.200-2 3-.3z" fill={W} /></Ic></Slot>
      <div className="flex w-[30px] justify-center"><Ic s={14} vb="0 0 14 14"><path d="M1 3.500h12L7 11z" stroke="currentColor" strokeLinejoin="round" /></Ic></div>
      <Div c="ml-[8px] mr-[2.5px] h-[30px]" />
      <Slot><Ic s={24}><path d="M1 1l5 5M6 2v4H2M23 1l-5 5M18 2v4h4M1 23l5-5M6 22v-4H2M23 23l-5-5M18 22v-4h4" {...L} strokeWidth="1.900" /><path d="M5 12q7-8 14 0-7 8-14 0z" {...L} strokeWidth="1.800" /><circle cx="12" cy="12" r="2.500" /></Ic></Slot>
      <Div />
      <Slot><span className="font-['DejaVu_Serif',serif] text-[20px] font-bold leading-none">A</span><span className="mb-[7px] -ml-px h-[2px] w-[8px] bg-current" /></Slot>
      <Slot><span className="font-['DejaVu_Serif',serif] text-[20px] font-bold leading-none">A</span><Ic s={9} c="mb-[8px] -ml-px" vb="0 0 8 8"><path d="M4 0v8M0 4h8" stroke="currentColor" strokeWidth="2" /></Ic></Slot>
      <Div />
      <Slot c="text-black"><Ic><rect x="1.800" y="1.800" width="20.400" height="20.400" rx="5" {...L} strokeWidth="2.400" /></Ic></Slot>
      <Slot c="text-black"><Ic><rect x="1.800" y="1.800" width="20.400" height="20.400" rx="5" fill="#a6a6a6" stroke="currentColor" strokeWidth="2.800" /><rect x="7.500" y="7.500" width="9" height="9" fill="white" stroke="currentColor" strokeWidth="2.400" /></Ic></Slot>
      <Div />
      <Slot><Ic s={20}><path d="M1 4.500h22v1.300H1zM1 10h22v2.400H1zM1 16h22v4H1z" /></Ic></Slot>
      <Slot><Ic><path d="M2.500 21.500L5 19M10.500 13.500l2.500-2.500M19 5l2.500-2.500" {...L} strokeWidth="4.200" /></Ic></Slot>
      <Div />
      <Slot><Ic><path d="M14 2h6a3 3 0 0 1 3 3v15a3 3 0 0 1-3 3H5a3 3 0 0 1-3-3v-6h6z" /><path d="M1 4V2h9v2M5.500 2v8M3.500 10h4" stroke="currentColor" strokeWidth="1.900" fill="none" /><circle cx="17.500" cy="11" r="3.500" fill={W} /><rect x="9" y="14" width="6.500" height="6.500" rx="1.500" fill={W} /><path d="M5 16q1-5 7-6" stroke={W} fill="none" /></Ic></Slot>
      <Div />
      <Slot>
        <div className="flex h-10 w-10 items-center justify-center rounded-[10px] bg-[#1e1e1e] text-white">
          <Ic><rect x="1" y="1" width="22" height="22" rx="4" /><rect x="5" y="5" width="5.500" height="5.500" fill="#1e1e1e" /><circle cx="17" cy="12" r="3.300" fill="#1e1e1e" /><rect x="9" y="15" width="5.500" height="5.500" fill="#1e1e1e" /></Ic>
        </div>
      </Slot>
      <Slot c="text-[#ababab]"><Ic><rect x="0.500" y="0.500" width="23" height="23" rx="4" />{[[5, 5], [13, 5], [5, 13], [13, 13]].map(([x, y]) => <rect key={x + "-" + y} x={x} y={y} width="6" height="6" rx="1.500" fill={W} />)}</Ic></Slot>
      <Div />
      <Slot><Ic s={23}><rect x="4" y="5" width="19" height="18" rx="5" /><rect x="9" y="1.500" width="9" height="9" rx="2" fill={W} stroke="currentColor" strokeWidth="2.200" /><circle cx="6.500" cy="10" r="5.200" fill={W} stroke="currentColor" strokeWidth="2.200" /><path d="M13 13l6 6M19 14v5h-5" stroke={W} strokeWidth="1.800" fill="none" /></Ic></Slot>
    </div>
  );
}

/* ---------- Outline panel ---------- */
const outline: { t: string; tw: number; h: string; b: [string, number][] }[] = [
  { t: "Brainstorm", tw: 87, h: "h-[123px]", b: [["Write down any ideas that come", 214], ["to mind that address your", 171], ["problem statement.", 128]] },
  { t: "Brainstorm  & ide...", tw: 150, h: "h-[138px]", b: [["Use this template in your own", 199], ["brainstorming sessions so your", 208], ["team can unleash their", 153]] },
  { t: "Before you collab...", tw: 152, h: "h-[138px]", b: [["A little bit of preparation goes a", 211], ["long way with this session.", 178], ["Here’s what you need to do to", 201]] },
  { t: "Define your prob...", tw: 150, h: "h-[138px]", b: [] },
];

function OutlinePanel() {
  return (
    <div className="absolute left-[1545px] top-[229px] flex h-[506px] w-[355px] flex-col overflow-hidden rounded-[17px] bg-white text-[#1e1e1e] shadow-[0_0_0_1px_rgba(0,0,0,0.1),0_2px_5px_rgba(0,0,0,0.16)]">
      <div className="flex h-[55px] shrink-0 items-center pl-[25px]">
        <T w={67} className="mt-[25px] text-[20px] font-bold">Outline</T>
        <Slot c="ml-[116px]"><Ic><path d="M4 1h16a3 3 0 0 1 3 3v9a3 3 0 0 1-3 3H4a3 3 0 0 1-3-3V4a3 3 0 0 1 3-3z" /><path d="M4 22.500l8-6 8 6" {...L} strokeWidth="2.400" /><path d="M9.500 5l6 3.500-6 3.500z" fill="white" /></Ic></Slot>
        <Slot><Download /></Slot>
        <Div c="mx-[2px] h-[25px]" />
        <Slot><Ic s={15} vb="0 0 14 14"><path d="M2 2l10 10M12 2L2 12" {...L} strokeWidth="2.600" /></Ic></Slot>
      </div>
      <div className="flex h-[426px] shrink-0 overflow-hidden">
        <div className="-mt-[29px] ml-[25px] flex w-[298px] flex-col gap-[11px]">
          {outline.map((o, i) => (
            <div key={o.t} className={"relative shrink-0 overflow-hidden rounded-[10px] border-2 border-[#ededed] bg-white " + o.h}>
              <div className="flex h-[60px] items-center pl-[18px] pr-[25px]">
                <T w={10} className="text-[17px] font-bold">{String(i + 1)}</T>
                <T w={o.tw} className="ml-[17px] text-[17px] font-bold text-[#2f2f2f]">{o.t}</T>
                <Ic s={24} c="ml-auto -mr-[8.5px]"><circle cx="12" cy="3.300" r="3" /><circle cx="12" cy="12" r="3" /><circle cx="12" cy="20.700" r="3" /></Ic>
              </div>
              <div className="-mt-[10px] flex h-[58px] flex-col items-start overflow-hidden pl-[37px] text-[14.5px] font-bold leading-5 text-[#4a4a4a]">
                {o.b.map(([t, w]) => <T key={t} w={w}>{t}</T>)}
              </div>
              <div className={"absolute inset-x-0 bottom-0 bg-[linear-gradient(to_bottom,rgba(250,250,250,0)_0%,rgba(250,250,250,1)_72%)] " + (i ? "top-[42px]" : "top-[30px]")} />
            </div>
          ))}
        </div>
        <div className="ml-auto flex w-[21px] flex-col items-center bg-[#fafafa] text-[#8b8b8b]">
          <Ic s={12} c="mt-[4px]" vb="0 0 12 12"><path d="M6 2l5 8H1z" stroke="currentColor" strokeLinejoin="round" /></Ic>
          <div className="mt-[26px] h-[156px] w-[11px] rounded-full bg-[#8b8b8b]" />
          <Ic s={12} c="mb-[4px] mt-auto" vb="0 0 12 12"><path d="M6 10L1 2h10z" stroke="currentColor" strokeLinejoin="round" /></Ic>
        </div>
      </div>
    </div>
  );
}

function MiniMap() {
  const rects = [[1500, 785, 75, 95], [1561, 788, 30.5, 95], [1590, 796, 29, 96], [1620.5, 804, 57.5, 112], [1674, 800, 55, 95], [1606, 881, 56, 16], [1690, 864, 55.5, 16], [1652.5, 795, 3.5, 3.5], [1771.5, 820, 1, 8]];
  const out = [[1811, 785, 30, 95], [1835, 772, 90, 95.5]];
  return (
    <div className="absolute left-[1545px] top-[745px] h-[186px] w-[355px] overflow-hidden rounded-[18px] border border-[#d6d6d6] bg-white shadow-[0_2px_4px_rgba(0,0,0,0.16)]">
      <svg width="353" height="184" viewBox="1546 746 353 184" fill="none" strokeWidth="1.300">
        <clipPath id="vp"><rect x="1540" y="785" width="240" height="119" /></clipPath>
        <rect x="1530" y="786" width="250" height="118" rx="2" fill="#cfc2c1" />
        <g clipPath="url(#vp)">{rects.map(([x, y, w, h], i) => <rect key={i} x={x} y={y} width={w} height={h} stroke="#776c6b" />)}</g>
        <rect x="1530" y="786" width="250" height="118" rx="2" stroke="#8a6a66" strokeWidth="2" />
        {out.map(([x, y, w, h], i) => <rect key={i} x={x} y={y} width={w} height={h} stroke="#777" />)}
      </svg>
    </div>
  );
}

function BottomBars() {
  return (
    <>
      <div className={BAR + " left-[896px] top-[941px] h-[60px] w-[128px] pl-[8px]"}>
        <Slot><Ic s={24}><circle cx="12" cy="12" r="11.500" /><circle cx="8" cy="8.500" r="1.800" fill="white" /><circle cx="16" cy="8.500" r="1.800" fill="white" /><path d="M6 14q6 7 12 0" stroke="white" strokeWidth="2" fill="none" strokeLinecap="round" /></Ic></Slot>
        <Div c="ml-[2px] h-[25px]" />
        <div className={"relative ml-[21px] flex h-10 w-10 items-center justify-center rounded-[8px] bg-[#8a6863] text-[18px] text-white " + UI}>
          <T w={21}>VA</T>
          <Ic s={20} c="absolute -bottom-[5px] -right-[4px] text-[#8a6863]"><circle cx="12" cy="12" r="12" /><path d="M12 3.500l2.500 5.700 6 .6-4.500 4 1.300 6-5.300-3.100-5.300 3.100 1.300-6-4.500-4 6-.6z" fill="white" /></Ic>
        </div>
      </div>
      <div className={BAR + " left-[1565px] top-[941px] h-[60px] w-[335px] pl-[8px]"}>
        <Slot><FaHandPaper size={22} /></Slot>
        <Slot><Ic s={23}><path d="M1 3a2 2 0 0 1 2-2h13a2 2 0 0 1 2 2v6l-4-1V5q0-2.500-2.500-2.500T9 5v8l-3-1-2 3H3a2 2 0 0 1-2-2z" /><path d="M10 5q0-1.500 1.500-1.500T13 5v6l7 2q3 1 2.500 5-.5 5.500-6 5.500-5 0-7-4L6 14.500q1-1.500 2.500 0L10 16z" /></Ic></Slot>
        <Slot>
          <div className="flex h-10 w-10 items-center justify-center rounded-[10px] bg-[#1e1e1e] text-white">
            <Ic s={24}><path d="M2 5q4-5 9-2.500 5 2 9-1.500l2 2v15q-4 5-9 3-5-2-9 1.500L2 20z" /><path d="M8.500 15Q5 10 5 8a3.700 3.700 0 0 1 7.400 0q0 2-3.900 7z" fill="white" stroke="#1e1e1e" strokeWidth="1.700" /><path d="M10 18.500h1M14 19h1M17.500 17.500h1M19 14h1" stroke="#1e1e1e" strokeWidth="1.600" /></Ic>
          </div>
        </Slot>
        <Div c="mx-[2.5px] h-[25px]" />
        <Slot><div className="h-[5px] w-[15px] rounded-[2px] bg-[#1e1e1e]" /></Slot>
        <div className="flex w-[88px] justify-center"><T w={31} className="text-[17px] font-bold">13%</T></div>
        <Slot><Ic s={16} vb="0 0 16 16"><path d="M8 1v14M1 8h14" {...L} strokeWidth="3.500" /></Ic></Slot>
      </div>
      <div className="absolute left-[1835px] top-[911px] flex h-[60px] w-[60px] items-center justify-center rounded-full bg-black text-white shadow-[0_4px_24px_rgba(0,0,0,0.28)]">
        <svg width="25" height="20" viewBox="0 0 25 20" fill="none" stroke="white" strokeWidth="3"><path d="M2 20V6a4.600 4.600 0 0 1 9.200 0v11.500h2.600V6A4.600 4.600 0 0 1 23 6v14" /></svg>
      </div>
    </>
  );
}

/* ---------- Windows taskbar ---------- */
function Taskbar() {
  const app = "flex h-[48px] w-[48px] items-center justify-center";
  return (
    <div className={"relative flex h-[60px] items-center border-t border-[#c3bcb8] bg-[linear-gradient(to_right,#f9e6dd_0%,#fae9df_25%,#f7e3e2_38%,#f9e4e6_55%,#e9edec_61%,#e5eef0_70%,#e8f0ea_77%,#f5f0e1_82%,#f7eee1_92%,#eaf0e6_100%)] text-[#1b1b1b] " + UI}>
      <svg width="32" height="32" viewBox="0 0 32 32" className="-mt-[3px] ml-[24px]">
        <path d="M20 3q10 6 8 15t-13 10q-8 0-12-8 10 2 14-4t3-13z" fill="#f5a623" /><path d="M3 20q4 8 12 8 6 0 9-4-6 1-10-3-5 2-11-1z" fill="#ee7f1d" />
        <path d="M4 14a4 4 0 0 1 0-7q1-5 6-4.500 4 .5 5 4 3 .5 3 4t-4 3.500z" fill="#a9c4f2" /><path d="M18 29a4 4 0 0 1 0-7q1-4 5-4t5 4q4 .5 3.500 4-.5 3-3.500 3z" fill="#b3cbf5" />
      </svg>
      <div className="-mt-[1px] ml-[8px] flex w-[86px] flex-col items-start text-[14px] leading-5">
        <T w={31}>30°C</T><T w={86} className="text-[#5f5754]">Partly cloudy</T>
      </div>
      <svg width="29" height="29" viewBox="0 0 29 29" className="ml-[462px]"><defs><linearGradient id="wn" x1="0" y1="0" x2="1" y2="1"><stop offset="0" stopColor="#4fd0fb" /><stop offset="1" stopColor="#0070d0" /></linearGradient></defs><path d="M1 0h13v14H0V1zM15 0h13l1 1v13H15zM0 15h14v14H1l-1-1zM15 15h14v13l-1 1H15z" fill="url(#wn)" /></svg>
      <div className="ml-[18px] flex h-[39px] w-[274px] items-center rounded-full border border-[#e4d4d4] bg-[#fdf7f6] pl-[13px] text-[#5a5554]">
        <Ic s={20} c="text-[#222]"><circle cx="10" cy="10" r="8" {...L} strokeWidth="2.400" /><path d="M16 16l6.500 6.500" {...L} strokeWidth="3" /></Ic>
        <T w={52} className="ml-[11px] text-[16px]">Search</T>
      </div>
      <div className="-mt-[1px] ml-[6px] flex gap-[7px]">
        <div className={app}><svg width="32" height="30" viewBox="0 0 32 30"><path d="M1 9h23v19H1z" fill="#2a2a2a" /><path d="M9 1h22v19H9z" fill="#f4f4f4" opacity="0.900" /><path d="M9 9h15v11H9z" fill="#b9b9b9" /></svg></div>
        <div className={app}><svg width="30" height="30" viewBox="0 0 30 30"><defs><linearGradient id="ch" x1="0" y1="0" x2="0" y2="1"><stop offset="0" stopColor="#8f80c8" /><stop offset="1" stopColor="#5a55d6" /></linearGradient></defs><path d="M1 28V15A14 14 0 1 1 15 29z" fill="url(#ch)" /><rect x="6" y="9" width="12" height="12" rx="2" fill="white" /><path d="M19 13l5-3v10l-5-3z" fill="white" /></svg></div>
        <div className={app + " relative rounded-md bg-white/60"}><svg width="32" height="32" viewBox="0 0 32 32"><defs><linearGradient id="ed" x1="0" y1="0" x2="1" y2="0"><stop offset="0" stopColor="#2aa7e0" /><stop offset="1" stopColor="#5ed36b" /></linearGradient></defs><circle cx="16" cy="16" r="15" fill="#1272c4" /><path d="M1 14A15 15 0 0 1 31 15q0 6-7 6-5 0-4-3 1-6-6-7Q6 10 1 17z" fill="url(#ed)" /><path d="M10 18q0-4 5-5 5 1 4 6t6 5q-3 2-7 2-7-1-8-8z" fill="#eaf5fb" /></svg><div className="absolute -bottom-[2px] h-[3px] w-[20px] rounded-full bg-[#0a67c0]" /></div>
        <div className={app}><svg width="30" height="30" viewBox="0 0 30 30"><path d="M10 8V3h10v5" fill="none" stroke="#2a9fe8" strokeWidth="2.500" /><path d="M1 8h28v18q0 3-3 3H4q-3 0-3-3z" fill="#155fae" /><path d="M9 12h5.500v5.500H9z" fill="#f25022" /><path d="M16 12h5.500v5.500H16z" fill="#7fba00" /><path d="M9 19h5.500v5.500H9z" fill="#00a4ef" /><path d="M16 19h5.500v5.500H16z" fill="#ffb900" /></svg></div>
        <div className={app}><div className="flex h-[30px] w-[30px] items-center justify-center rounded-full border-2 border-black font-['Liberation_Sans',sans-serif] font-bold"><T w={23} className="text-[10px]">DELL</T></div></div>
        <div className={app}><svg width="28" height="32" viewBox="0 0 28 32"><path d="M1 1l13 7L27 1v22l-13 8-13-8z" fill="#c7282d" /><path d="M8 11l6 4 6-4v9l-6 4-6-4z" fill="#f0eceb" /></svg></div>
        <div className={app}><svg width="32" height="28" viewBox="0 0 32 28"><path d="M1 3q0-2 2-2h8l3 3h15q2 0 2 2v3H1z" fill="#dd9a11" /><path d="M1 6h30v19q0 2-2 2H3q-2 0-2-2z" fill="#fdc834" /><path d="M6 27v-6q0-2 2-2h16q2 0 2 2v6z" fill="#1677cb" /></svg></div>
      </div>
      <div className="absolute right-[25px] flex items-center">
        <Ic s={14} c="mr-[22px]" vb="0 0 14 14"><path d="M1.500 10L7 4l5.500 6" {...L} strokeWidth="1.600" /></Ic>
        <Ic s={21} c="mr-[23px] text-[#777]"><path d="M5 20a5 5 0 0 1-1-9.500Q6 4 12 4t7.500 6.500A5 5 0 0 1 19 20z" stroke="#333" strokeWidth="1.500" /><path d="M5 19l9-7 8 6-3 1z" fill="#ddd" /></Ic>
        <div className="mr-[23px] flex w-[30px] flex-col items-center text-[14px] leading-5"><T w={29}>ENG</T><T w={15}>IN</T></div>
        <Ic s={19} c="mr-[10px]"><path d="M1 9q11-10 22 0M4.500 13q7.500-7 15 0M8 16.500q4-3.500 8 0" {...L} strokeWidth="1.800" /><circle cx="12" cy="20" r="2" /></Ic>
        <Ic s={20} c="mr-[10px]"><path d="M2 9h4l6-5v16l-6-5H2zM15 9q2 3 0 6M18 6.500q4 5.500 0 11M21 4q5.500 8 0 16" {...L} strokeWidth="1.600" /></Ic>
        <Ic s={21}><rect x="1" y="5" width="18" height="14" rx="3" {...L} strokeWidth="1.800" /><rect x="4" y="8" width="10" height="8" rx="1" /><path d="M21 10v4" {...L} strokeWidth="2.500" /></Ic>
        <div className="-mt-[1px] ml-[19px] flex w-[78px] flex-col items-end text-[14px] leading-5"><T w={36}>21:37</T><T w={78}>24-04-2023</T></div>
        <div className="ml-[9px] flex h-[20px] w-[20px] items-center justify-center rounded-full bg-[#0067c0] text-[12px] text-white">3</div>
      </div>
    </div>
  );
}

export default function App() {
  return (
    <div className="flex h-[1080px] w-[1920px] flex-col overflow-hidden bg-[#fafafa] font-['Lato','Open_Sans',sans-serif]">
      <TabStrip />
      <AddressBar />
      <div className="relative z-10 flex h-[60px] shrink-0 items-center bg-[#b3202a] pl-[527px] text-white">
        <Ic s={26} c="-mt-[4px]"><circle cx="12" cy="12" r="12" /><path d="M10 5h4l-.6 8h-2.800z" fill="#b3202a" /><circle cx="12" cy="17" r="2" fill="#b3202a" /></Ic>
        <T w={725} className="ml-[17px] text-[17px] font-bold">You've reached the maximum number of murals. Upgrade your free plan for unlimited murals.</T>
        <div className="ml-[11px] flex h-10 w-[89px] items-center justify-center rounded-[8px] bg-white text-[15px] font-bold text-[#1e1e1e]"><T w={59}>Upgrade</T></div>
      </div>
      <main className="relative h-[871px] shrink-0 overflow-hidden">
        <div className="absolute -top-[149px] left-0 h-[1020px] w-[1920px]">
          <Boards />
          <Selection />
          <Box x={26} y={1007} w={1238} h={8} c="rounded-full bg-[#8b8b8b]/70" />
          <Box x={1906} y={209} w={8} h={775} c="rounded-full bg-[#8b8b8b]/70" />
          <TitleBar />
          <TopBars />
          <SideTools />
          <ShapeBar />
          <OutlinePanel />
          <MiniMap />
          <BottomBars />
        </div>
      </main>
      <Taskbar />
    </div>
  );
}
